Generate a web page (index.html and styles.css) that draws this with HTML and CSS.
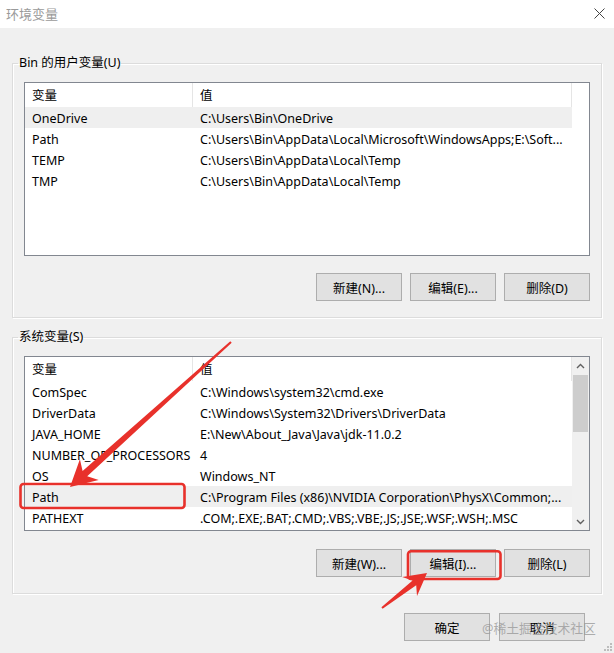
FILE: index.html
```html
<!DOCTYPE html>
<html lang="zh-CN">
<head>
<meta charset="utf-8">
<title>环境变量</title>
<link rel="stylesheet" href="styles.css">
</head>
<body>
<div class="window">
  <div class="titlebar">
    <span class="title">环境变量</span>
    <svg class="close" width="11" height="11" viewBox="0 0 11 11"><path d="M0.5 0.5 L10.5 10.5 M10.5 0.5 L0.5 10.5" stroke="#444" stroke-width="1" fill="none"/></svg>
  </div>
  <div class="content">
    <fieldset class="group">
      <legend>Bin 的用户变量(U)</legend>
      <div class="list list-user">
        <div class="list-main">
          <div class="list-head"><div class="hcell c1">变量</div><div class="hcell c2">值</div></div>
          <div class="row sel"><div class="c1">OneDrive</div><div class="c2">C:\Users\Bin\OneDrive</div></div>
          <div class="row"><div class="c1">Path</div><div class="c2">C:\Users\Bin\AppData\Local\Microsoft\WindowsApps;E:\Soft...</div></div>
          <div class="row"><div class="c1">TEMP</div><div class="c2">C:\Users\Bin\AppData\Local\Temp</div></div>
          <div class="row"><div class="c1">TMP</div><div class="c2">C:\Users\Bin\AppData\Local\Temp</div></div>
        </div>
      </div>
      <div class="btn-row">
        <button class="btn">新建(N)...</button>
        <button class="btn">编辑(E)...</button>
        <button class="btn">删除(D)</button>
      </div>
    </fieldset>

    <fieldset class="group group-sys">
      <legend>系统变量(S)</legend>
      <div class="list list-sys">
        <div class="list-main">
          <div class="list-head"><div class="hcell c1">变量</div><div class="hcell c2">值</div></div>
          <div class="row"><div class="c1">ComSpec</div><div class="c2">C:\Windows\system32\cmd.exe</div></div>
          <div class="row"><div class="c1">DriverData</div><div class="c2">C:\Windows\System32\Drivers\DriverData</div></div>
          <div class="row"><div class="c1">JAVA_HOME</div><div class="c2">E:\New\About_Java\Java\jdk-11.0.2</div></div>
          <div class="row"><div class="c1">NUMBER_OF_PROCESSORS</div><div class="c2">4</div></div>
          <div class="row"><div class="c1">OS</div><div class="c2">Windows_NT</div></div>
          <div class="row sel"><div class="c1">Path</div><div class="c2">C:\Program Files (x86)\NVIDIA Corporation\PhysX\Common;...</div></div>
          <div class="row"><div class="c1">PATHEXT</div><div class="c2">.COM;.EXE;.BAT;.CMD;.VBS;.VBE;.JS;.JSE;.WSF;.WSH;.MSC</div></div>
        </div>
        <div class="scrollbar">
          <div class="sb-btn"><svg width="9" height="6" viewBox="0 0 9 6"><path d="M1 5 L4.5 1.5 L8 5" stroke="#606060" stroke-width="1.4" fill="none"/></svg></div>
          <div class="sb-thumb"></div>
          <div class="sb-btn sb-down"><svg width="9" height="6" viewBox="0 0 9 6"><path d="M1 1 L4.5 4.5 L8 1" stroke="#606060" stroke-width="1.4" fill="none"/></svg></div>
        </div>
      </div>
      <div class="btn-row">
        <button class="btn">新建(W)...</button>
        <button class="btn">编辑(I)...</button>
        <button class="btn">删除(L)</button>
      </div>
    </fieldset>

    <div class="dialog-buttons">
      <button class="btn">确定</button>
      <button class="btn">取消</button>
    </div>
  </div>

  <div class="watermark">@稀土掘金技术社区</div>

  <svg class="grip" width="9" height="9" viewBox="0 0 9 9">
    <rect x="7" y="1" width="2" height="2" fill="#bdbdbd"/>
    <rect x="4" y="4" width="2" height="2" fill="#bdbdbd"/>
    <rect x="7" y="4" width="2" height="2" fill="#bdbdbd"/>
    <rect x="1" y="7" width="2" height="2" fill="#bdbdbd"/>
    <rect x="4" y="7" width="2" height="2" fill="#bdbdbd"/>
    <rect x="7" y="7" width="2" height="2" fill="#bdbdbd"/>
  </svg>

  <svg class="annotations" width="614" height="653" viewBox="0 0 614 653">
    <rect x="20.5" y="484" width="164" height="24" rx="3" fill="none" stroke="#e8312b" stroke-width="2.6"/>
    <rect x="408" y="551.3" width="92.5" height="27.7" rx="3" fill="none" stroke="#e8312b" stroke-width="2.6"/>
    <polygon fill="#e8312b" points="70,487 98.7,480 87.2,476.2 231.7,342.7 230.3,341.3 82.6,471 79.9,459.2"/>
    <polygon fill="#e8312b" points="427,573 417,596 416.2,585.2 382.6,608.8 381.4,607.2 412.6,580.4 402.2,577"/>
  </svg>
</div>
</body>
</html>
```

FILE: styles.css
```css
* { box-sizing: border-box; }

html, body {
  margin: 0;
  padding: 0;
}

body {
  width: 614px;
  height: 653px;
  overflow: hidden;
  background: #f0f0f0;
  font-family: "Noto Sans", "Noto Sans CJK SC", sans-serif;
  font-size: 12.5px;
  color: #000;
}

.window {
  position: relative;
  width: 614px;
  height: 653px;
  background: #f0f0f0;
}

.titlebar {
  height: 28px;
  background: #fff;
  display: flex;
  align-items: center;
  justify-content: space-between;
  padding: 0 9px 2px 6px;
}

.title {
  color: #9a9a9a;
  font-size: 13px;
}

.content {
  padding: 26px 12px 0 12px;
}

.group {
  margin: 0;
  border: 1px solid #dcdcdc;
  box-shadow: inset 1px 1px 0 #fff, 1px 1px 0 #fff;
  padding: 10px 11px 16px 11px;
  min-width: 0;
}

.group legend {
  padding: 0 1px;
  margin-left: -6px;
  line-height: 18px;
  font-size: 12.5px;
}

.group-sys {
  margin-top: 10px;
}

.list {
  display: flex;
  border: 1px solid #828790;
  background: #fff;
  height: 174px;
}

.list-sys {
  height: 175px;
}

.list-main {
  width: 547px;
  flex: none;
}

.list-head {
  display: flex;
  height: 24px;
}

.hcell {
  line-height: 26px;
  padding-left: 7px;
  border-right: 1px solid #e5e5e5;
}

.c1 { width: 168px; flex: none; }
.c2 { width: 379px; flex: none; }

.row {
  display: flex;
  height: 21px;
  line-height: 23px;
  overflow: hidden;
}

.row > div {
  padding-left: 7px;
  white-space: nowrap;
  overflow: hidden;
}

.row.sel {
  background: #efefef;
}

.scrollbar {
  margin-left: auto;
  width: 17px;
  background: #f0f0f0;
  display: flex;
  flex-direction: column;
  align-items: center;
}

.sb-btn {
  width: 17px;
  height: 17px;
  display: flex;
  align-items: center;
  justify-content: center;
}

.sb-thumb {
  width: 15px;
  height: 57px;
  margin-top: 1px;
  background: #cdcdcd;
}

.sb-down {
  margin-top: auto;
}

.btn-row {
  display: flex;
  justify-content: flex-end;
  gap: 8px;
  margin-top: 17px;
}

.list-sys + .btn-row {
  margin-top: 18px;
}

.btn {
  width: 86px;
  height: 28px;
  background: #e1e1e1;
  border: 1px solid #adadad;
  border-radius: 0;
  font-family: inherit;
  font-size: 12.5px;
  color: #000;
  padding: 0;
  margin: 0;
}

.dialog-buttons {
  display: flex;
  justify-content: flex-end;
  gap: 9px;
  margin-top: 19px;
  padding-right: 17px;
}

.watermark {
  position: absolute;
  left: 482px;
  top: 618px;
  font-size: 12.8px;
  line-height: 20px;
  color: rgba(150, 150, 150, 0.75);
  white-space: nowrap;
}

.grip {
  position: absolute;
  right: 2px;
  bottom: 2px;
}

.annotations {
  position: absolute;
  left: 0;
  top: 0;
  pointer-events: none;
}
```
